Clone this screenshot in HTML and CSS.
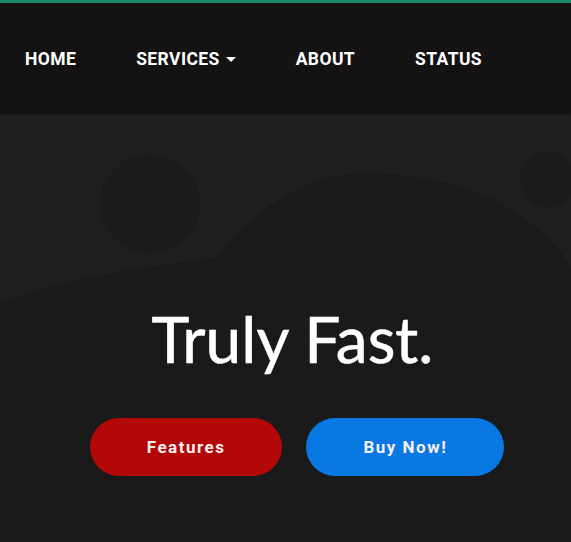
FILE: index.html
```html
<!DOCTYPE html>
<html lang="en">
<head>
<meta charset="utf-8">
<title>Truly Fast.</title>
<link rel="stylesheet" href="styles.css">
</head>
<body>
<header class="topbar">
  <nav class="nav">
    <a class="nav-link" href="#">HOME</a>
    <a class="nav-link" href="#">SERVICES <span class="caret"></span></a>
    <a class="nav-link" href="#">ABOUT</a>
    <a class="nav-link" href="#">STATUS</a>
  </nav>
</header>
<main class="hero">
  <svg class="hero-bg" viewBox="0 0 571 429" preserveAspectRatio="none" aria-hidden="true">
    <path d="M0 190 C60 167 150 152 215 145 C240 117 290 59 370 60 C470 62 540 102 571 154 L571 429 L0 429 Z" fill="#1a1a1a"/>
    <circle cx="150" cy="91" r="50" fill="#1b1b1b"/>
    <circle cx="548" cy="67" r="28" fill="#1b1b1b"/>
  </svg>
  <div class="hero-content">
    <h1 class="hero-title">Truly Fast.</h1>
    <div class="actions">
      <a class="btn btn-red" href="#">Features</a>
      <a class="btn btn-blue" href="#">Buy Now!</a>
    </div>
  </div>
</main>
</body>
</html>
```
FILE: styles.css
```css
* { box-sizing: border-box; }
html, body { margin: 0; padding: 0; }
body {
  background: #1a1a1a;
  font-family: "Roboto", "Liberation Sans", sans-serif;
  color: #fff;
  height: 542px;
  overflow: hidden;
}
.topbar {
  border-top: 3px solid #1a8c6c;
  background: #141212;
  box-shadow: 0 1px 2px rgba(0,0,0,0.5);
  position: relative;
  z-index: 2;
}
.nav {
  height: 110px;
  display: flex;
  align-items: center;
  padding-left: 25px;
  gap: 60px;
}
.nav-link {
  color: #fff;
  text-decoration: none;
  font-weight: 700;
  font-size: 17.5px;
  letter-spacing: 0.4px;
  display: flex;
  align-items: center;
  gap: 6px;
  padding-top: 2px;
}
.caret {
  width: 0;
  height: 0;
  border-left: 5px solid transparent;
  border-right: 5px solid transparent;
  border-top: 5px solid #fff;
}
.hero {
  position: relative;
  height: 429px;
  background: #1f1f1f;
  overflow: hidden;
}
.hero-bg {
  position: absolute;
  inset: 0;
  width: 100%;
  height: 100%;
}
.hero-content {
  position: relative;
  display: flex;
  flex-direction: column;
  align-items: center;
  padding-top: 187px;
  padding-left: 14px;
}
.hero-title {
  margin: 0;
  font-family: "Lato", sans-serif;
  font-weight: 400;
  font-size: 64px;
  line-height: 78px;
  color: #fff;
  -webkit-text-stroke: 0.6px #fff;
}
.actions {
  display: flex;
  gap: 24px;
  margin-top: 40px;
  margin-left: 9px;
}
.btn {
  height: 58px;
  border-radius: 29px;
  padding: 0 57px;
  display: flex;
  align-items: center;
  color: #f6f0f0;
  text-decoration: none;
  font-weight: 700;
  font-size: 17px;
  letter-spacing: 1.5px;
}
.btn-red { background: #b30808; }
.btn-blue { background: #0a78e2; }
```
